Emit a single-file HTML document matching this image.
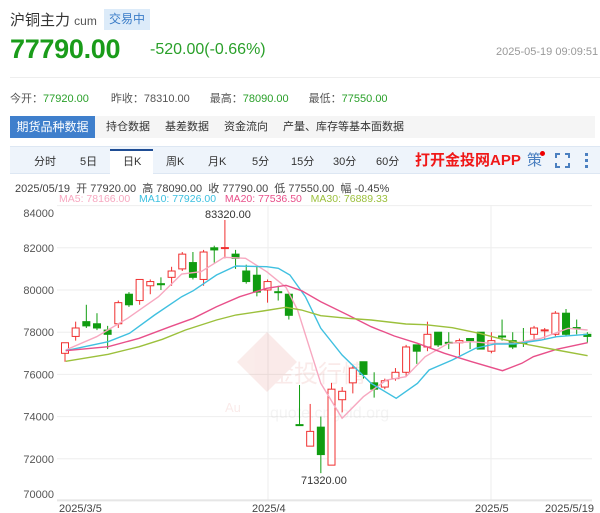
<!DOCTYPE html>
<html><head><meta charset="utf-8"><style>
*{margin:0;padding:0;box-sizing:border-box}
body{width:600px;height:513px;background:#fff;font-family:"Liberation Sans","Noto Sans CJK SC",sans-serif;position:relative;overflow:hidden;color:#333}
.a{position:absolute;white-space:nowrap}
</style></head><body>
<div class="a" style="left:10px;top:9px;font-size:15px;color:#333">沪铜主力 <span style="font-size:12px;color:#555">cum</span></div>
<div class="a" style="left:104px;top:9px;width:46px;height:21px;background:#dcebf9;color:#3a7cc7;font-size:12px;line-height:21px;text-align:center">交易中</div>
<div class="a" style="left:10px;top:34px;font-size:27px;font-weight:bold;color:#1a9c1a;letter-spacing:-0.3px">77790.00</div>
<div class="a" style="left:150px;top:41px;font-size:16px;color:#2aa02a">-520.00(-0.66%)</div>
<div class="a" style="left:496px;top:46px;font-size:11px;color:#999">2025-05-19 09:09:51</div>
<div class="a" style="left:10px;top:77px;width:590px;height:1px;background:#eee"></div>
<div class="a" style="left:10px;top:90px;font-size:11px;color:#555">今开：<span style="color:#2aa02a">77920.00</span><span style="display:inline-block;width:22px"></span>昨收：78310.00<span style="display:inline-block;width:20px"></span>最高：<span style="color:#2aa02a">78090.00</span><span style="display:inline-block;width:20px"></span>最低：<span style="color:#2aa02a">77550.00</span></div>
<div class="a" style="left:10px;top:116px;width:585px;height:22px;background:#f5f5f5"></div>
<div class="a" style="left:10px;top:116px;width:85px;height:22px;background:#3f7fcc;color:#fff;font-size:12px;line-height:22px;text-align:center">期货品种数据</div>
<div class="a" style="left:106px;top:116px;font-size:11px;line-height:22px;color:#333">持仓数据<span style="display:inline-block;width:15px"></span>基差数据<span style="display:inline-block;width:15px"></span>资金流向<span style="display:inline-block;width:15px"></span>产量、库存等基本面数据</div>
<div class="a" style="left:10px;top:146px;width:590px;height:28px;background:#eef4fb;border-top:1px solid #dde7f3;border-bottom:1px solid #dde7f3"></div>
<div class="a" style="left:110px;top:149px;width:43px;height:26px;background:#fff;border-top:2px solid #1f4d94"></div>
<div class="a" style="left:0;top:153px;font-size:11px;color:#333;line-height:18px">
<span class="a" style="left:34px">分时</span><span class="a" style="left:80px">5日</span><span class="a" style="left:123px">日K</span><span class="a" style="left:166px">周K</span><span class="a" style="left:208px">月K</span><span class="a" style="left:252px">5分</span><span class="a" style="left:291px">15分</span><span class="a" style="left:333px">30分</span><span class="a" style="left:376px">60分</span></div>
<div class="a" style="left:415px;top:151px;font-size:15px;font-weight:bold;color:#f01818;line-height:20px">打开金投网APP</div>
<div class="a" style="left:527px;top:151px;font-size:15px;color:#4a7fc0;line-height:20px">策</div>
<div class="a" style="left:540px;top:151px;width:5px;height:5px;border-radius:50%;background:#e00"></div>
<svg class="a" style="left:555px;top:153px" width="15" height="15" viewBox="0 0 15 15" fill="none" stroke="#4a7fc0" stroke-width="2"><path d="M1 5V1h4M10 1h4v4M14 10v4h-4M5 14H1v-4"/></svg>
<div class="a" style="left:585px;top:153px;width:3px;height:3px;background:#4a7fc0;box-shadow:0 6px 0 #4a7fc0,0 12px 0 #4a7fc0"></div>
<div class="a" style="left:15px;top:180px;font-size:11px;color:#444">2025/05/19 &nbsp;开 77920.00 &nbsp;高 78090.00 &nbsp;收 77790.00 &nbsp;低 77550.00 &nbsp;幅 -0.45%</div>
<div class="a" style="left:59px;top:193px;font-size:10.5px"><span style="color:#f7a8c0">MA5: 78166.00</span>&nbsp;&nbsp; <span style="color:#3cc0e0">MA10: 77926.00</span>&nbsp;&nbsp; <span style="color:#e8508a">MA20: 77536.50</span>&nbsp;&nbsp; <span style="color:#9cc03c">MA30: 76889.33</span></div>
<svg id="ch" class="a" style="left:0;top:0" width="600" height="513"></svg>
<script>
var P=function(p){return 290-(p-80000)*0.0211};
var s='';
var labs=[84000,82000,80000,78000,76000,74000,72000,70000];
labs.forEach(function(v){var y=P(v);var ly=y+4;if(v==84000)ly=217;if(v==70000)ly=498;s+='<line x1="57" x2="592" y1="'+y+'" y2="'+y+'" stroke="#eee"/>';s+='<text x="54" y="'+ly+'" font-size="11" fill="#555" text-anchor="end" font-family="Liberation Sans">'+v+'</text>';});
s+='<line x1="268" x2="268" y1="205" y2="500" stroke="#eee"/><line x1="491" x2="491" y1="205" y2="500" stroke="#eee"/>';
s+='<line x1="57" x2="592" y1="500" y2="500" stroke="#ddd"/>';
[[59,'2025/3/5'],[252,'2025/4'],[475,'2025/5'],[545,'2025/5/19']].forEach(function(d){s+='<text x="'+d[0]+'" y="512" font-size="11" fill="#444" font-family="Liberation Sans">'+d[1]+'</text>'});
s+='<g opacity="0.1"><path d="M237 362l30-30 30 30-30 30z" fill="#d04030"/><text x="225" y="412" font-size="13" fill="#d04030" font-family="Liberation Sans">Au</text><text x="270" y="382" font-size="24" fill="#d04030">金投行情</text><text x="270" y="418" font-size="16" fill="#999" font-family="Liberation Sans">quote.cngold.org</text></g>';
var c=[[77000,77500,77500,76600],[77800,78200,78500,77600],[78500,78300,79300,78200],[78400,78200,78900,78100],[78100,77900,78300,77200],[78400,79400,79500,78200],[79800,79300,79900,79200],[79500,80500,80500,79300],[80200,80400,80500,79800],[80300,80250,80600,80000],[80600,80900,81100,80200],[81000,81700,81800,80900],[81300,80600,81800,80500],[80500,81800,81900,80200],[82000,81900,82100,81300],[82000,82010,83320,81500],[81700,81500,81900,81000],[80900,80400,81200,80300],[80700,79900,81100,79700],[80000,80400,80500,79400],[79920,79900,80200,79500],[79800,78800,79900,78600],[73620,73600,75500,73600],[72600,73300,74600,72600],[73500,72200,74000,71320],[71700,75300,75600,71700],[74800,75200,75400,74200],[75600,76300,76400,75100],[76600,76000,76600,75800],[75600,75300,76100,74900],[75400,75700,75800,75300],[75800,76100,76300,75700],[76100,77300,77400,75900],[77400,77100,77400,76500],[77300,77900,78500,77100],[78000,77400,78000,77300],[77520,77500,78000,77200],[77500,77600,77700,76900],[77700,77600,77700,77200],[78000,77200,78000,77200],[77100,77600,78000,77000],[77820,77800,78600,77600],[77600,77300,78000,77200],[77520,77500,78200,77300],[77900,78200,78300,77600],[78100,78110,78200,77700],[77900,78900,79000,77800],[78900,77900,79100,77800],[78220,78200,78600,77900],[77900,77800,78000,77500]];
c.forEach(function(k,i){var x=65+i*10.66,up=k[1]>k[0],col=up?'#f03030':'#109c10';var t=P(Math.max(k[0],k[1])),b=P(Math.min(k[0],k[1]));var h=Math.max(b-t,1);
s+='<line x1="'+x+'" x2="'+x+'" y1="'+P(k[2])+'" y2="'+P(k[3])+'" stroke="'+col+'"/>';
s+='<rect x="'+(x-3.5)+'" y="'+t+'" width="7" height="'+h+'" fill="'+(up?'#fff':col)+'" stroke="'+col+'"/>';});
function L(pts,col){var d=pts.map(function(p){return (p[0]/2.587).toFixed(1)+','+(p[1]/3+200).toFixed(1)}).join(' ');s+='<polyline points="'+d+'" fill="none" stroke="'+col+'" stroke-width="1.4"/>';}
L([[170,450],[250,410],[330,355],[410,290],[470,222],[520,215],[580,172],[635,175],[690,215],[740,262],[770,330],[800,440],[830,550],[885,655],[940,590],[1000,540],[1050,530],[1100,470],[1160,430],[1220,425],[1270,430],[1330,430],[1400,415],[1470,385],[1520,390]],'#f7a8c0');
L([[170,452],[280,425],[335,400],[400,345],[470,290],[500,272],[560,225],[610,198],[690,200],[720,205],[750,225],[790,290],[830,385],[885,465],[960,550],[1025,595],[1080,550],[1110,510],[1170,480],[1230,445],[1280,432],[1330,432],[1400,420],[1440,410],[1520,403]],'#40c0e0');
L([[170,452],[280,440],[360,415],[440,380],[500,355],[560,320],[620,290],[690,265],[740,256],[780,272],[830,305],[900,345],[960,380],[1020,408],[1080,430],[1150,460],[1220,485],[1300,512],[1350,490],[1380,470],[1440,448],[1520,428]],'#e8508a');
L([[170,484],[280,463],[360,440],[420,418],[480,390],[560,360],[610,345],[680,333],[740,322],[780,330],[830,347],[900,355],[960,360],[1050,372],[1100,374],[1170,383],[1240,400],[1300,418],[1370,435],[1440,450],[1520,467]],'#9cc03c');
s+='<text x="205" y="218" font-size="11" fill="#333" font-family="Liberation Sans">83320.00</text>';
s+='<text x="301" y="484" font-size="11" fill="#333" font-family="Liberation Sans">71320.00</text>';
document.getElementById('ch').innerHTML=s;
</script>
</body></html>
